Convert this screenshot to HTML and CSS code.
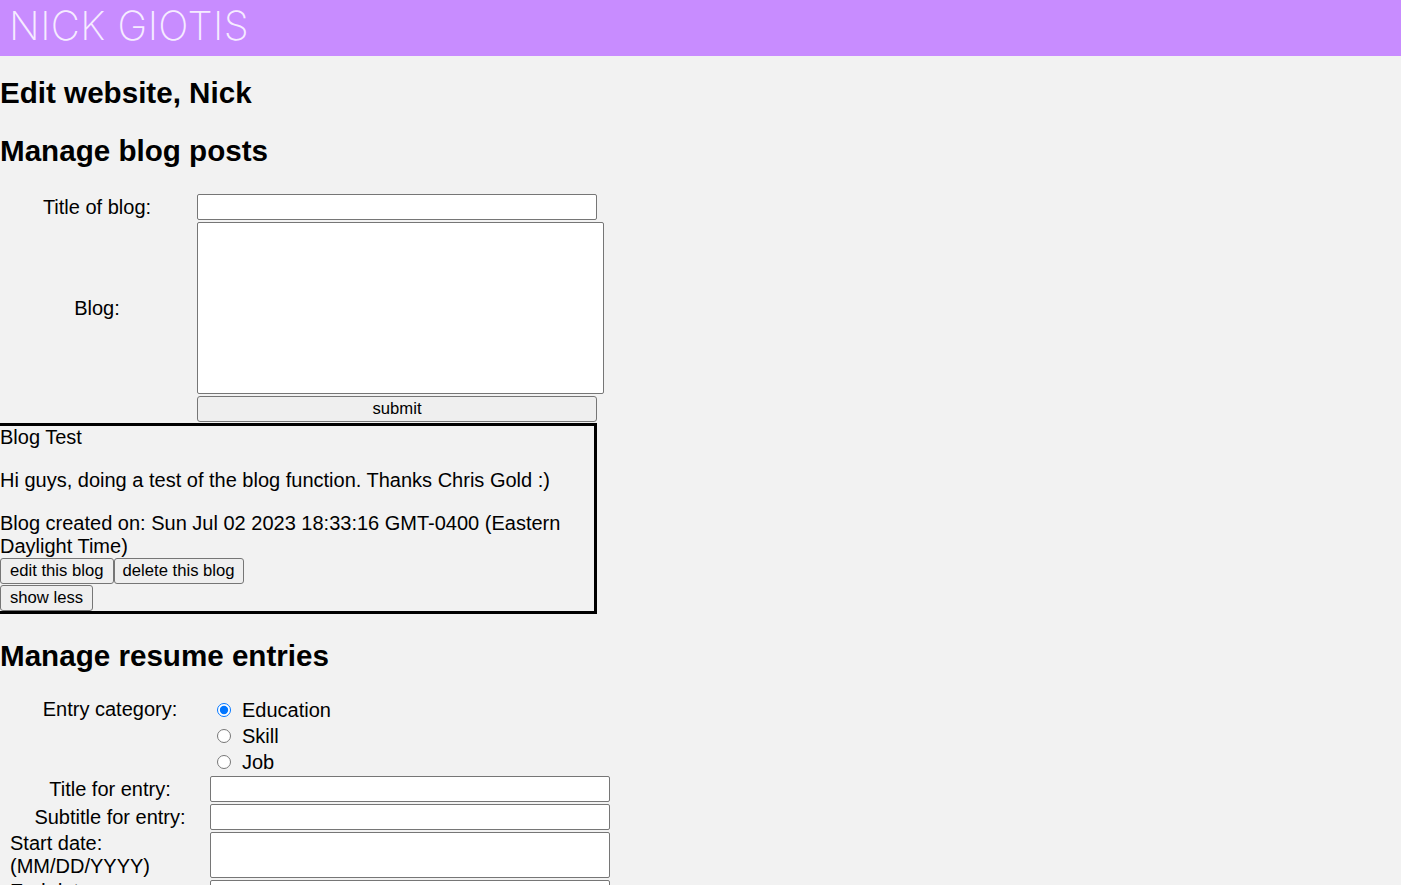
FILE: index.html
```html
<!DOCTYPE html>
<html lang="en">
<head>
<meta charset="utf-8">
<title>Edit website</title>
<link rel="stylesheet" href="styles.css">
</head>
<body>
<header class="site-header"><span class="brand">NICK GIOTIS</span></header>
<main class="page">
  <h2 class="heading heading-first">Edit website, Nick</h2>
  <h2 class="heading">Manage blog posts</h2>
  <form class="blog-form">
    <label class="label" for="blog-title">Title of blog:</label>
    <input id="blog-title" class="text-input blog-input" type="text">
    <label class="label" for="blog-text">Blog:</label>
    <textarea id="blog-text" class="blog-area"></textarea>
    <span class="spacer"></span>
    <button type="button" class="btn submit-btn">submit</button>
  </form>
  <div class="blog-card">
    <div class="blog-title">Blog Test</div>
    <p class="blog-body">Hi guys, doing a test of the blog function. Thanks Chris Gold :)</p>
    <div class="blog-date">Blog created on: Sun Jul 02 2023 18:33:16 GMT-0400 (Eastern Daylight Time)</div>
    <div class="btn-row"><button type="button" class="btn">edit this blog</button><button type="button" class="btn btn-narrow">delete this blog</button></div>
    <div class="btn-row btn-row-second"><button type="button" class="btn">show less</button></div>
  </div>
  <h2 class="heading heading-resume">Manage resume entries</h2>
  <form class="resume-form">
    <span class="label label-top">Entry category:</span>
    <div class="radio-group">
      <label class="radio-row"><input type="radio" name="cat" class="radio" checked><span>Education</span></label>
      <label class="radio-row"><input type="radio" name="cat" class="radio"><span>Skill</span></label>
      <label class="radio-row"><input type="radio" name="cat" class="radio"><span>Job</span></label>
    </div>
    <label class="label" for="entry-title">Title for entry:</label>
    <input id="entry-title" class="text-input" type="text">
    <label class="label" for="entry-sub">Subtitle for entry:</label>
    <input id="entry-sub" class="text-input" type="text">
    <label class="label label-left" for="entry-start">Start date:<br>(MM/DD/YYYY)</label>
    <input id="entry-start" class="text-input" type="text">
    <label class="label label-left" for="entry-end">End date:<br>(MM/DD/YYYY)</label>
    <input id="entry-end" class="text-input" type="text">
  </form>
</main>
</body>
</html>
```
FILE: styles.css
```css
html, body {
  margin: 0;
  padding: 0;
}

body {
  background: #f2f2f2;
  color: #000;
  font-family: "Liberation Sans", Arial, sans-serif;
  font-size: 20px;
  line-height: 23px;
}

.site-header {
  height: 56px;
  background: #c88cff;
  display: flex;
  align-items: center;
  padding-left: 9px;
}

.brand {
  font-family: "Inter", "Open Sans", sans-serif;
  font-weight: 150;
  font-size: 40px;
  line-height: 40px;
  color: #f6ecff;
  letter-spacing: 0.5px;
  margin-top: -4px;
}

.heading {
  font-size: 29.6px;
  line-height: 34px;
  font-weight: 700;
  margin: 24px 0 0;
}

.heading-first {
  margin-top: 20px;
}

.heading-resume {
  margin-top: 25px;
}

.blog-form {
  display: grid;
  grid-template-columns: 194px auto;
  column-gap: 3px;
  row-gap: 2px;
  justify-content: start;
  margin: 26px 0 1px;
}

.label {
  text-align: center;
  align-self: center;
}

.text-input,
.blog-area {
  box-sizing: border-box;
  border: 1px solid #767676;
  border-radius: 2px;
  background: #fff;
  margin: 0;
  padding: 1px 2px;
  font-family: "Liberation Sans", Arial, sans-serif;
  font-size: 16px;
}

.text-input {
  width: 400px;
  height: 26px;
}

.blog-area {
  width: 407px;
  height: 172px;
  resize: none;
}

.btn {
  box-sizing: border-box;
  height: 26px;
  margin: 0;
  padding: 0 9px;
  background: #efefef;
  border: 1px solid #767676;
  border-radius: 3px;
  color: #000;
  font-family: "Liberation Sans", Arial, sans-serif;
  font-size: 16.67px;
  line-height: 20px;
}

.btn-narrow {
  padding: 0 8px;
}

.submit-btn {
  width: 400px;
}

.blog-card {
  width: 594px;
  border: 3px solid #000;
  border-left: 0;
}

.blog-title {
  line-height: 23px;
}

.blog-body {
  margin: 20px 0;
}

.btn-row {
  display: flex;
}

.btn-row-second {
  margin-top: 1px;
}

.resume-form {
  display: grid;
  grid-template-columns: 200px 400px;
  row-gap: 2px;
  margin: 23px 0 0;
  padding-left: 10px;
}

.resume-form .text-input {
  height: auto;
  min-height: 26px;
}

.label-top {
  align-self: start;
  padding-top: 2px;
}

.label-left {
  text-align: left;
}

.radio-group {
  display: flex;
  flex-direction: column;
  padding-top: 1px;
  margin-bottom: -1px;
}

.radio-row {
  display: flex;
  align-items: center;
  height: 26px;
}

.radio {
  width: 14px;
  height: 14px;
  margin: 0 11px 0 7px;
}
```
